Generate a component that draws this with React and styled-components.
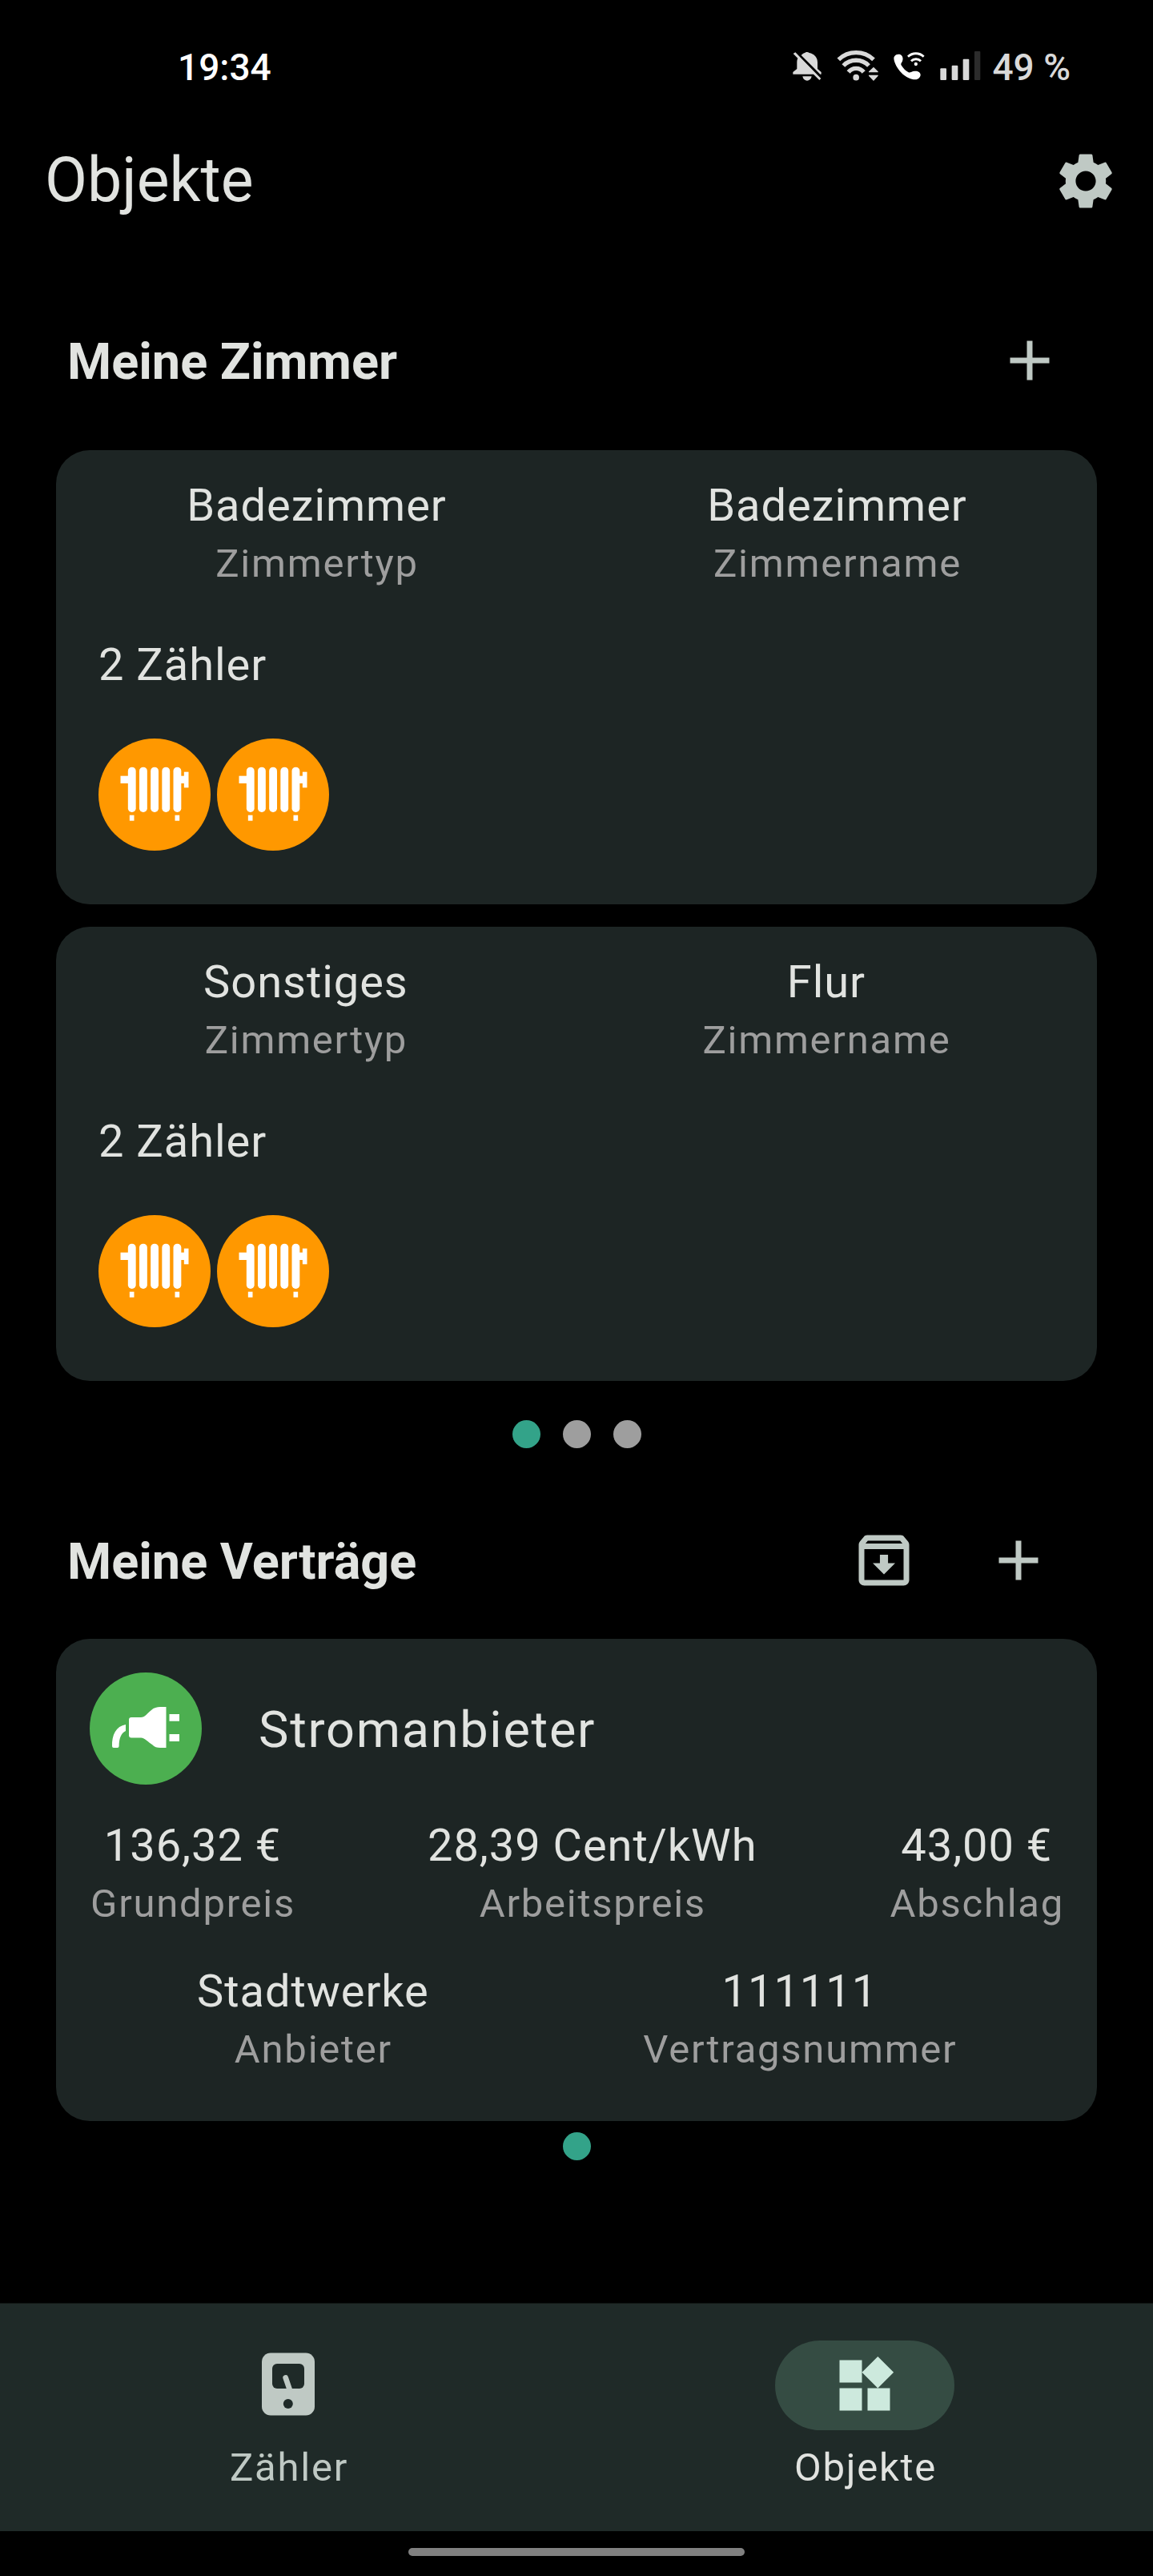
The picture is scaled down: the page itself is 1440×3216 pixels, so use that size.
import React from "react";
import styled, { createGlobalStyle } from "styled-components";

const color = {
  bg: "#000000",
  card: "#1d2524",
  nav: "#1f2a28",
  pill: "#354c43",
  pillIcon: "#cde9dd",
  text: "#e1e3e0",
  muted: "#9e9e9e",
  icon: "#bfc9c4",
  accent: "#33a389",
  status: "#d9d9d9",
};

const GlobalStyle = createGlobalStyle`
  * { box-sizing: border-box; }
  body {
    margin: 0;
    background: ${color.bg};
    color: ${color.text};
    font-family: Roboto, "Noto Sans", sans-serif;
  }
  svg { display: block; flex: none; }
`;

const Screen = styled.div`
  width: 1440px;
  height: 3216px;
  display: flex;
  flex-direction: column;
  background: ${color.bg};
  overflow: hidden;
`;

const StatusBar = styled.div`
  height: 112px;
  padding: 57px 103px 0 222px;
  display: flex;
  align-items: flex-start;
  justify-content: space-between;
  font-size: 46px;
  line-height: 54px;
  font-weight: 500;
`;

const Clock = styled.span`
  color: #ffffff;
`;

const StatusIcons = styled.div`
  height: 54px;
  display: flex;
  align-items: center;
  gap: 19px;
  color: ${color.status};
`;

const Battery = styled.span`
  margin-left: -4.5px;
`;

const AppHeader = styled.header`
  height: 228px;
  padding: 0 42px 0 56px;
  display: flex;
  align-items: center;
  justify-content: space-between;
`;

const PageTitle = styled.h1`
  margin: 0;
  padding-bottom: 2px;
  font-size: 77px;
  line-height: 98px;
  font-weight: 400;
`;

const Content = styled.main`
  flex: 1;
  display: flex;
  flex-direction: column;
`;

const SectionHead = styled.div`
  height: ${(p) => p.$height}px;
  padding: ${(p) => p.$top || 0}px ${(p) => p.$right}px 0 84px;
  display: flex;
  align-items: center;
  justify-content: space-between;
`;

const SectionTitle = styled.h2`
  margin: 0;
  padding-top: 2px;
  font-size: 63px;
  line-height: 84px;
  font-weight: 700;
`;

const Actions = styled.div`
  display: flex;
  gap: 84px;
  padding-bottom: 2px;
`;

const CardList = styled.div`
  display: flex;
  flex-direction: column;
  gap: 28px;
  padding: 0 70px;
`;

const Card = styled.section`
  border-radius: 42px;
  background: ${color.card};
`;

const RoomCard = styled(Card)`
  height: 567px;
  padding-top: 28px;
`;

const FieldRow = styled.div`
  display: flex;
  justify-content: ${(p) => p.$justify || "space-around"};
`;

const FieldBox = styled.div`
  display: flex;
  flex-direction: column;
  align-items: center;
`;

const Value = styled.span`
  margin: 0 -0.5px 0 0.5px;
  font-size: 56px;
  line-height: 82px;
  letter-spacing: 0.95px;
  white-space: nowrap;
`;

const Label = styled.span`
  margin: 0 -1px 0 1px;
  font-size: 49px;
  line-height: 64px;
  letter-spacing: 1.75px;
  color: ${color.muted};
  white-space: nowrap;
`;

const MeterCount = styled.div`
  margin: 54px 0 52px;
  padding-left: 53px;
  font-size: 56px;
  line-height: 80px;
  letter-spacing: 0.95px;
`;

const MeterIcons = styled.div`
  display: flex;
  gap: 8.75px;
  padding-left: 52.5px;
`;

const Badge = styled.div`
  width: 140px;
  height: 140px;
  flex: none;
  border-radius: 50%;
  background: ${(p) => p.$bg};
`;

const Dots = styled.div`
  display: flex;
  justify-content: center;
  gap: 28px;
  margin-top: ${(p) => p.$top}px;
`;

const Dot = styled.span`
  width: 35px;
  height: 35px;
  border-radius: 50%;
  background: ${(p) => (p.$active ? color.accent : color.muted)};
`;

const ContractCard = styled(Card)`
  height: 602px;
  padding: 42px 42px 0;
`;

const ContractHead = styled.div`
  display: flex;
  align-items: center;
  gap: 71px;
  margin-bottom: 35px;
`;

const ContractTitle = styled.h3`
  margin: 0;
  padding-top: 3px;
  font-size: 63px;
  line-height: 84px;
  font-weight: 400;
  letter-spacing: 1.75px;
`;

const ContractFields = styled.div`
  display: flex;
  flex-direction: column;
  gap: 36px;
`;

const NavBar = styled.nav`
  height: 284px;
  padding-top: 46px;
  display: grid;
  grid-template-columns: 1fr 1fr;
  background: ${color.nav};
  box-shadow: 0 -1px 0 #101413;
`;

const NavItem = styled.div`
  display: flex;
  flex-direction: column;
  align-items: center;
  gap: 12px;
  color: ${(p) => (p.$active ? color.text : color.icon)};
`;

const NavPill = styled.div`
  width: 224px;
  height: 112px;
  border-radius: 56px;
  display: flex;
  align-items: center;
  justify-content: center;
  background: ${(p) => (p.$active ? color.pill : "transparent")};
  color: ${(p) => (p.$active ? color.pillIcon : color.icon)};
`;

const NavLabel = styled.span`
  margin: 0 -1px 0 1px;
  font-size: 49px;
  line-height: 70px;
  letter-spacing: 1.75px;
`;

const GestureArea = styled.div`
  height: 56px;
  padding-top: 21px;
  display: flex;
  justify-content: center;
`;

const GestureHandle = styled.div`
  width: 420px;
  height: 10px;
  border-radius: 5px;
  background: #808080;
`;

const BellOff = () => (
  <svg width="36" height="46" viewBox="90 63 108 138" fill="currentColor">
    <path d="M122 87C127 82 131 79 136 78C139 74 148 74 152 78C171 82 183 95 183 113V138L197 150V158H193Z" />
    <path d="M100 76L196 174L190 180L168 158H91V150L106 138V112C106 107 107 102 109 98L92 81Z" />
    <path d="M127 166H161C159 177 152 182 144 182C136 182 129 177 127 166Z" />
  </svg>
);

const Wifi = () => (
  <svg width="52" height="46" viewBox="256 63 156 138" fill="none">
    <g stroke="currentColor" strokeWidth="16">
      <path d="M263 103A95 95 0 0 1 394 103" />
      <path d="M281 126A66 66 0 0 1 376 126" />
      <path d="M300 150A36 36 0 0 1 357 150" />
    </g>
    <circle cx="328.500" cy="170" r="11.500" fill="currentColor" />
    <path d="M394 131L411 148V151H376V148ZM376 161H411V164L394 183L376 164Z" fill="currentColor" />
  </svg>
);

const WifiCall = () => (
  <svg width="39" height="46" viewBox="466 63 117 138" fill="none">
    <path
      d="M470 90C475 84 484 82 492 85C502 90 503 104 497 113C494 118 492 120 496 126C503 137 512 146 522 151C529 154 534 146 545 146C557 145 567 151 567 160C567 170 558 178 548 178C530 178 510 168 495 152C480 136 468 115 467 98C467 95 468 92 470 90Z"
      fill="#ffffff"
    />
    <g stroke="#ffffff" strokeWidth="8.500">
      <path d="M520 92A43 43 0 0 1 579 92" />
      <path d="M532 109A25 25 0 0 1 568 109" />
    </g>
    <circle cx="549.500" cy="120" r="6.500" fill="#ffffff" />
  </svg>
);

const Signal = () => (
  <svg width="51" height="46" viewBox="639 63 153 138" fill="currentColor">
    <rect x="640" y="136" width="23" height="44" rx="3" />
    <rect x="683" y="125" width="23" height="55" rx="3" />
    <rect x="725" y="101" width="23" height="79" rx="3" />
    <rect x="768" y="72" width="22" height="108" rx="3" fill="#2c2c2c" />
  </svg>
);

const Settings = () => (
  <svg width="84" height="84" viewBox="0 0 24 24" fill={color.icon}>
    <path d="M19.14 12.94c.04-.3.06-.61.06-.94 0-.32-.02-.64-.07-.94l2.03-1.58a.49.49 0 0 0 .12-.61l-1.92-3.32a.488.488 0 0 0-.59-.22l-2.39.96c-.5-.38-1.03-.7-1.62-.94l-.36-2.54a.484.484 0 0 0-.48-.41h-3.84c-.24 0-.43.17-.47.41l-.36 2.54c-.59.24-1.13.57-1.62.94l-2.39-.96c-.22-.08-.47 0-.59.22L2.740 8.870c-.12.21-.08.47.12.61l2.030 1.580c-.05.3-.09.63-.09.94s.02.64.07.94l-2.030 1.580a.49.49 0 0 0-.12.61l1.920 3.320c.12.22.37.29.59.22l2.390-.96c.5.38 1.030.7 1.620.94l.36 2.540c.05.24.24.41.48.41h3.840c.24 0 .44-.17.47-.41l.36-2.540c.59-.24 1.130-.56 1.620-.94l2.390.96c.22.08.47 0 .59-.22l1.920-3.320c.12-.22.07-.47-.12-.61l-2.010-1.580zM12 15.600c-1.980 0-3.600-1.620-3.600-3.600s1.620-3.600 3.600-3.600 3.600 1.620 3.600 3.600-1.620 3.600-3.600 3.600z" />
  </svg>
);

const Plus = () => (
  <svg width="84" height="84" viewBox="0 0 24 24" fill={color.icon}>
    <path d="M19 13h-6v6h-2v-6H5v-2h6V5h2v6h6v2z" />
  </svg>
);

const Archive = () => (
  <svg width="84" height="84" viewBox="0 0 24 24" fill={color.icon} fillRule="evenodd">
    <path d="M20.540 5.230l-1.390-1.680C18.880 3.210 18.470 3 18 3H6c-.47 0-.88.21-1.160.55L3.460 5.230C3.170 5.570 3 6.020 3 6.500V19c0 1.100.9 2 2 2h14c1.100 0 2-.9 2-2V6.500c0-.48-.17-.93-.46-1.270zM6.240 5h11.520l.83 1H5.420l.82-1zM5 19V8h14v11H5z" />
    <path d="M13.450 10h-2.900v3H8l4 4 4-4h-2.550z" />
  </svg>
);

const Radiator = () => (
  <svg width="140" height="140" viewBox="187.500 487 420 420" fill="#ffffff">
    {[298, 340.5, 383, 425.5, 468].map((x) => (
      <rect key={x} x={x} y="594" width="29.500" height="169" rx="14.500" />
    ))}
    <rect x="270" y="627" width="32" height="28" />
    <rect x="495" y="627" width="16" height="28" />
    <rect x="508" y="612" width="17" height="59" />
    <rect x="304" y="774" width="17" height="21" />
    <rect x="474" y="774" width="17" height="21" />
  </svg>
);

const Plug = () => (
  <svg width="140" height="140" viewBox="0 0 140 140" fill="#ffffff">
    <path d="M52 56H64C69 56 72 51 77 47C80 44 84 43 88 43H95.500V94H88C84 94 81 93 78 90C73 87 69 81.500 64 81.500H52Q49 81.500 49 78.500V59Q49 56 52 56Z" />
    <path d="M99.500 52H112V60.700H99.500ZM99.500 77H112V86H99.500Z" />
    <path d="M45 65V73C39 76 36.800 82 36.600 92Q36.600 94 34.600 94H30Q28 94 28 92C27.500 78 33 67 45 65Z" />
  </svg>
);

const MeterDevice = () => (
  <svg width="84" height="84" viewBox="0 0 84 84">
    <rect x="9" y="1.500" width="66" height="78" rx="11" fill="currentColor" />
    <rect x="22" y="15" width="40" height="31" rx="6" fill={color.nav} />
    <path d="M38.700 32.500L44 48" stroke="currentColor" strokeWidth="6.800" strokeLinecap="round" />
    <circle cx="41.800" cy="65" r="6" fill={color.nav} />
  </svg>
);

const Widgets = () => (
  <svg width="84" height="84" viewBox="0 0 24 24" fill="currentColor">
    <path d="M13 13v8h8v-8h-8zM3 21h8v-8H3v8zM3 3v8h8V3H3zm13.660-1.310L11 7.340 16.660 13l5.660-5.660-5.660-5.650z" />
  </svg>
);

const Field = ({ value, label }) => (
  <FieldBox>
    <Value>{value}</Value>
    <Label>{label}</Label>
  </FieldBox>
);

const rooms = [
  { type: "Badezimmer", name: "Badezimmer", meters: 2 },
  { type: "Sonstiges", name: "Flur", meters: 2 },
];

export default function App() {
  return (
    <Screen>
      <GlobalStyle />
      <StatusBar>
        <Clock>19:34</Clock>
        <StatusIcons>
          <BellOff />
          <Wifi />
          <WifiCall />
          <Signal />
          <Battery>49 %</Battery>
        </StatusIcons>
      </StatusBar>
      <AppHeader>
        <PageTitle>Objekte</PageTitle>
        <Settings />
      </AppHeader>
      <Content>
        <SectionHead $height={222} $right={112}>
          <SectionTitle>Meine Zimmer</SectionTitle>
          <Actions>
            <Plus />
          </Actions>
        </SectionHead>
        <CardList>
          {rooms.map((room) => (
            <RoomCard key={room.type}>
              <FieldRow>
                <Field value={room.type} label="Zimmertyp" />
                <Field value={room.name} label="Zimmername" />
              </FieldRow>
              <MeterCount>{room.meters} Zähler</MeterCount>
              <MeterIcons>
                {Array.from({ length: room.meters }, (_, i) => (
                  <Badge key={i} $bg="#ff9800">
                    <Radiator />
                  </Badge>
                ))}
              </MeterIcons>
            </RoomCard>
          ))}
        </CardList>
        <Dots $top={49}>
          <Dot $active />
          <Dot />
          <Dot />
        </Dots>
        <SectionHead $height={238} $top={44} $right={126}>
          <SectionTitle>Meine Verträge</SectionTitle>
          <Actions>
            <Archive />
            <Plus />
          </Actions>
        </SectionHead>
        <CardList>
          <ContractCard>
            <ContractHead>
              <Badge $bg="#4caf50">
                <Plug />
              </Badge>
              <ContractTitle>Stromanbieter</ContractTitle>
            </ContractHead>
            <ContractFields>
              <FieldRow $justify="space-between">
                <Field value="136,32 €" label="Grundpreis" />
                <Field value="28,39 Cent/kWh" label="Arbeitspreis" />
                <Field value="43,00 €" label="Abschlag" />
              </FieldRow>
              <FieldRow>
                <Field value="Stadtwerke" label="Anbieter" />
                <Field value="111111" label="Vertragsnummer" />
              </FieldRow>
            </ContractFields>
          </ContractCard>
        </CardList>
        <Dots $top={14}>
          <Dot $active />
        </Dots>
      </Content>
      <NavBar>
        <NavItem>
          <NavPill>
            <MeterDevice />
          </NavPill>
          <NavLabel>Zähler</NavLabel>
        </NavItem>
        <NavItem $active>
          <NavPill $active>
            <Widgets />
          </NavPill>
          <NavLabel>Objekte</NavLabel>
        </NavItem>
      </NavBar>
      <GestureArea>
        <GestureHandle />
      </GestureArea>
    </Screen>
  );
}
